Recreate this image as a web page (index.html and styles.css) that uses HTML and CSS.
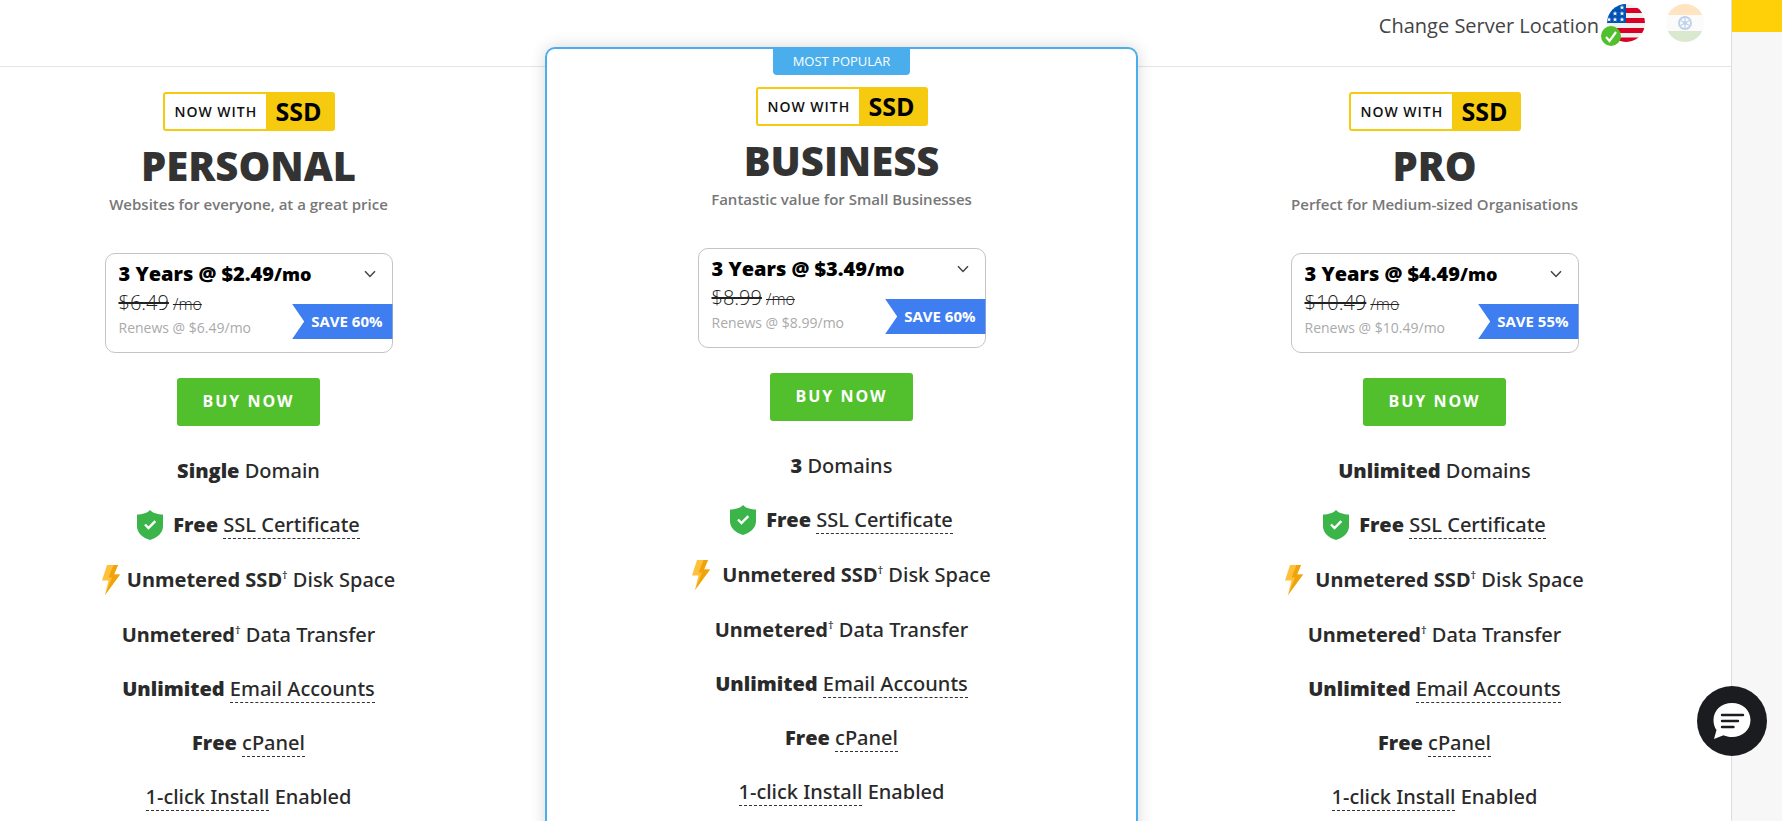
FILE: index.html
```
<!DOCTYPE html>
<html lang="en">
<head>
  <meta charset="UTF-8">
  <meta name="viewport" content="width=device-width, initial-scale=1.0">
  <title>Web Hosting Plans</title>
  <link rel="stylesheet" href="styles.css">
</head>
<body>

<!-- Shared icons -->
<svg class="sprite" aria-hidden="true">
  <symbol id="chevron" viewBox="0 0 12 8">
    <path d="M1 1.2 6 6.4 11 1.2" fill="none" stroke="#444" stroke-width="1.5"/>
  </symbol>
  <symbol id="shield" viewBox="0 0 26 30">
    <path d="M13 0C15.500 2.800 20.500 4.500 26 4.500V16.500C26 23 20 28 13 30 6 28 0 23 0 16.500V4.500C5.500 4.500 10.500 2.800 13 0Z" fill="#3bb54a"/>
    <path d="M8 14.500 11.500 18 18.300 11.200" fill="none" stroke="#fff" stroke-width="2.400"/>
  </symbol>
  <symbol id="bolt" viewBox="0 0 18 30">
    <path d="M5 0H16L12 9.500H18L3 30 6.500 15.500H0Z" fill="#ffc13b"/>
    <path d="M16 0 12 9.500H18L3 30 10 12.500H6.500L11.500 0Z" fill="#f0a30a"/>
  </symbol>
</svg>

<div class="page">
  <main class="content">

    <!-- Server location -->
    <header class="location">
      <span class="location-label">Change Server Location</span>
      <button type="button" class="flag" aria-label="United States">
        <svg width="38" height="38" viewBox="0 0 38 38">
          <clipPath id="usClip"><circle cx="19" cy="19" r="19"/></clipPath>
          <g clip-path="url(#usClip)">
            <rect width="38" height="38" fill="#f0f0f0"/>
            <path d="M19 6.500H38M19 16.500H38M0 26.500H38M0 36H38" stroke="#d80027" stroke-width="5"/>
            <rect width="19" height="19" fill="#0052b4"/>
            <g fill="#fff">
              <path id="star" d="M8 7l.6 1.700h1.800L9 9.800l.5 1.700L8 10.400 6.500 11.500 7 9.800 5.600 8.700h1.800Z"/>
              <use href="#star" x="7" y="-6"/>
              <use href="#star" x="7"/>
              <use href="#star" y="6"/>
              <use href="#star" x="7" y="6"/>
              <use href="#star" x="-6" y="6"/>
            </g>
          </g>
        </svg>
        <svg class="flag-check" width="20" height="20" viewBox="0 0 20 20">
          <circle cx="10" cy="10" r="10" fill="#52c02c"/>
          <path d="M5 11 8.500 15 15 6" fill="none" stroke="#fff" stroke-width="2.200"/>
        </svg>
      </button>
      <button type="button" class="flag flag-off" aria-label="India">
        <svg width="38" height="38" viewBox="0 0 38 38">
          <clipPath id="inClip"><circle cx="19" cy="19" r="19"/></clipPath>
          <g clip-path="url(#inClip)">
            <rect width="38" height="38" fill="#f0f0f0"/>
            <rect width="38" height="11" fill="#ff9811"/>
            <rect y="27" width="38" height="11" fill="#6da544"/>
            <circle cx="19" cy="19" r="7" fill="#0052b4"/>
            <circle cx="19" cy="19" r="5" fill="#f0f0f0"/>
            <path d="M19 14V24M14.700 16.500 23.300 21.500M14.700 21.500 23.300 16.500" stroke="#0052b4" stroke-width="1.200"/>
            <circle cx="19" cy="19" r="2" fill="#0052b4"/>
          </g>
        </svg>
      </button>
    </header>

    <!-- Plans -->
    <div class="plans">

      <section class="plan plan-personal">
        <p class="ssd"><span class="ssd-text">NOW WITH</span><strong class="ssd-name">SSD</strong></p>
        <h2>PERSONAL</h2>
        <p class="tagline">Websites for everyone, at a great price</p>
        <div class="price">
          <div class="term">
            <select id="termPersonal" aria-label="Personal billing term">
              <option>3 Years @ $2.49</option>
            </select>
            <label for="termPersonal">/mo</label>
            <svg class="chevron" aria-hidden="true"><use href="#chevron"/></svg>
          </div>
          <p class="old"><s>$6.49</s><s class="per">/mo</s></p>
          <p class="renews">Renews @ $6.49/mo</p>
          <span class="save">SAVE 60%</span>
        </div>
        <button type="button" class="buy">BUY NOW</button>
        <ul class="features">
          <li><b>Single</b> Domain</li>
          <li><svg class="shield" aria-hidden="true"><use href="#shield"/></svg><span><b>Free</b> <a href="#ssl">SSL Certificate</a></span></li>
          <li><svg class="bolt" aria-hidden="true"><use href="#bolt"/></svg><span><strong>Unmetered SSD</strong><sup>†</sup> Disk Space</span></li>
          <li><strong>Unmetered</strong><sup>†</sup> Data Transfer</li>
          <li><b>Unlimited</b> <a href="#email">Email Accounts</a></li>
          <li><b>Free</b> <a href="#cpanel">cPanel</a></li>
          <li><a href="#install">1-click Install</a> Enabled</li>
        </ul>
      </section>

      <section class="plan plan-popular">
        <span class="tab">MOST POPULAR</span>
        <p class="ssd"><span class="ssd-text">NOW WITH</span><strong class="ssd-name">SSD</strong></p>
        <h2>BUSINESS</h2>
        <p class="tagline">Fantastic value for Small Businesses</p>
        <div class="price">
          <div class="term">
            <select id="termBusiness" aria-label="Business billing term">
              <option>3 Years @ $3.49</option>
            </select>
            <label for="termBusiness">/mo</label>
            <svg class="chevron" aria-hidden="true"><use href="#chevron"/></svg>
          </div>
          <p class="old"><s>$8.99</s><s class="per">/mo</s></p>
          <p class="renews">Renews @ $8.99/mo</p>
          <span class="save">SAVE 60%</span>
        </div>
        <button type="button" class="buy">BUY NOW</button>
        <ul class="features">
          <li><b>3</b> Domains</li>
          <li><svg class="shield" aria-hidden="true"><use href="#shield"/></svg><span><b>Free</b> <a href="#ssl">SSL Certificate</a></span></li>
          <li><svg class="bolt" aria-hidden="true"><use href="#bolt"/></svg><span><strong>Unmetered SSD</strong><sup>†</sup> Disk Space</span></li>
          <li><strong>Unmetered</strong><sup>†</sup> Data Transfer</li>
          <li><b>Unlimited</b> <a href="#email">Email Accounts</a></li>
          <li><b>Free</b> <a href="#cpanel">cPanel</a></li>
          <li><a href="#install">1-click Install</a> Enabled</li>
        </ul>
      </section>

      <section class="plan">
        <p class="ssd"><span class="ssd-text">NOW WITH</span><strong class="ssd-name">SSD</strong></p>
        <h2>PRO</h2>
        <p class="tagline">Perfect for Medium-sized Organisations</p>
        <div class="price">
          <div class="term">
            <select id="termPro" aria-label="Pro billing term">
              <option>3 Years @ $4.49</option>
            </select>
            <label for="termPro">/mo</label>
            <svg class="chevron" aria-hidden="true"><use href="#chevron"/></svg>
          </div>
          <p class="old"><s>$10.49</s><s class="per">/mo</s></p>
          <p class="renews">Renews @ $10.49/mo</p>
          <span class="save">SAVE 55%</span>
        </div>
        <button type="button" class="buy">BUY NOW</button>
        <ul class="features">
          <li><b>Unlimited</b> Domains</li>
          <li><svg class="shield" aria-hidden="true"><use href="#shield"/></svg><span><b>Free</b> <a href="#ssl">SSL Certificate</a></span></li>
          <li><svg class="bolt" aria-hidden="true"><use href="#bolt"/></svg><span><strong>Unmetered SSD</strong><sup>†</sup> Disk Space</span></li>
          <li><strong>Unmetered</strong><sup>†</sup> Data Transfer</li>
          <li><b>Unlimited</b> <a href="#email">Email Accounts</a></li>
          <li><b>Free</b> <a href="#cpanel">cPanel</a></li>
          <li><a href="#install">1-click Install</a> Enabled</li>
        </ul>
      </section>

    </div>
  </main>
  <div class="gutter"><div class="gutter-top"></div></div>
</div>

<button type="button" class="chat" aria-label="Open chat">
  <svg width="38" height="38" viewBox="0 0 38 38">
    <path d="M19 1C29.500 1 37.500 8 37.500 18S29.500 35 19 35C16 35 13 34.300 10.500 33.200L1 37 3.500 28C1.500 25.500 .5 22 .5 18 .5 8 8.500 1 19 1Z" fill="#fff"/>
    <path d="M9 13H30M9 19H25M9 25H20.500" stroke="#1b1c20" stroke-width="2.400" stroke-linecap="round"/>
  </svg>
</button>

</body>
</html>
```
FILE: styles.css
```
* {
  box-sizing: border-box;
}
body {
  margin: 0;
  font-family: "Open Sans", "Noto Sans", sans-serif;
  color: #2a2a2a;
  background-color: #f7f7f7;
  overflow-x: hidden;
}
p, h2, ul {
  margin: 0;
  padding: 0;
}
button, select {
  font-family: inherit;
  border: none;
  cursor: pointer;
}
.sprite {
  display: none;
}
.page {
  display: flex;
  min-height: 100vh;
}
.content {
  flex: 1;
  min-width: 0;
  background-color: #fff;
  border-right: 1px solid #ddd;
}
.gutter {
  width: 50px;
}
.gutter-top {
  height: 32px;
  background-color: #ffd008;
}

/* Server location */
.location {
  display: flex;
  justify-content: flex-end;
  align-items: flex-start;
  height: 67px;
  padding: 4px 27px 0 0;
  border-bottom: 1px solid #e5e5e5;
}
.location-label {
  font-size: 20px;
  line-height: 44px;
  color: #444;
  margin-right: 8px;
}
.flag {
  position: relative;
  width: 38px;
  height: 38px;
  padding: 0;
  background: none;
}
.flag svg {
  display: block;
}
.flag .flag-check {
  position: absolute;
  left: -6px;
  bottom: -4px;
}
.flag-off {
  margin-left: 21px;
  opacity: 0.25;
}

/* Plans */
.plans {
  display: grid;
  grid-template-columns: repeat(3, 1fr);
  margin-left: -48px;
}
.plan {
  display: flex;
  flex-direction: column;
  align-items: center;
  padding: 25px 20px 40px;
}
.plan-popular {
  position: relative;
  margin-top: -20px;
  padding-top: 38px;
  background-color: #fff;
  border: 2px solid #4aaeec;
  border-bottom: none;
  border-radius: 10px 10px 0 0;
  box-shadow: 0 0 16px rgba(0, 0, 0, 0.16);
}
.tab {
  position: absolute;
  top: 0;
  padding: 0 20px 1px;
  font-size: 13px;
  line-height: 25px;
  color: #fff;
  background-color: #4aaeec;
  border-radius: 0 0 4px 4px;
}
.ssd {
  display: flex;
  width: 172px;
  height: 39px;
  border: 2px solid #f6ca0e;
  border-radius: 3px;
  color: #111;
  line-height: 35px;
}
.ssd-text {
  flex: 1;
  padding-left: 10px;
  font-size: 14px;
  font-weight: 600;
  letter-spacing: 1px;
}
.ssd-name {
  width: 67px;
  padding-left: 10px;
  font-size: 25px;
  color: #000;
  background-color: #f6ca0e;
}
h2 {
  margin-top: 8px;
  font-size: 40px;
  font-weight: 800;
  line-height: 54px;
  color: #333;
}
.tagline {
  margin-top: 1px;
  font-size: 15px;
  font-weight: 600;
  line-height: 20px;
  color: #777;
}
.price {
  position: relative;
  width: 288px;
  height: 100px;
  margin-top: 39px;
  padding: 7px 12px 0 13px;
  border: 1px solid #c4c4c4;
  border-radius: 10px;
}
.term {
  display: flex;
  align-items: baseline;
  color: #000;
  font-weight: 800;
}
.term select {
  appearance: none;
  field-sizing: content;
  padding: 0;
  font-size: 20px;
  font-weight: 800;
  line-height: 26px;
  color: #000;
  background: none;
}
.term label {
  font-size: 18px;
}
.chevron {
  align-self: center;
  width: 12px;
  height: 8px;
  margin: 0 4px 0 auto;
}
.old {
  margin-top: 1px;
  font-size: 20px;
  font-weight: 300;
  line-height: 30px;
  color: #222;
}
.per {
  margin-left: 4px;
  font-size: 16px;
}
.renews {
  font-size: 14px;
  line-height: 18px;
  color: #aaa;
}
.save {
  position: absolute;
  right: -1px;
  top: 50px;
  padding: 0 10px 0 19px;
  font-size: 15px;
  font-weight: 700;
  line-height: 35px;
  color: #fff;
  background-color: #3f7ef0;
  clip-path: polygon(0 0, 100% 0, 100% 100%, 0 100%, 12px 50%);
}
.buy {
  width: 143px;
  height: 48px;
  margin-top: 25px;
  padding: 0 0 2px;
  font-size: 16px;
  font-weight: 700;
  letter-spacing: 2px;
  color: #fff;
  background-color: #52c02c;
  border-radius: 3px;
}
.features {
  display: flex;
  flex-direction: column;
  align-items: center;
  gap: 24px;
  margin-top: 30px;
  list-style: none;
  font-family: "Noto Sans", "Open Sans", sans-serif;
  font-size: 20px;
  font-weight: 500;
  line-height: 30px;
}
.features li {
  display: flow-root;
}
.features li:has(svg) {
  display: flex;
  align-items: center;
}
.features li:has(sup) {
  padding-top: 1px;
}
.features b {
  font-family: "Open Sans", sans-serif;
  font-weight: 800;
  line-height: 1;
}
.features sup {
  font-size: 11px;
  line-height: 1;
}
.features a {
  color: inherit;
  text-decoration: none;
  border-bottom: 1px dashed #333;
}
.shield {
  width: 26px;
  height: 30px;
  margin-right: 10px;
}
.bolt {
  width: 18px;
  height: 30px;
  margin-right: 12px;
}
.plan-personal .bolt {
  margin-right: 7px;
}

/* Chat */
.chat {
  position: fixed;
  right: 15px;
  bottom: 65px;
  display: flex;
  align-items: center;
  justify-content: center;
  width: 70px;
  height: 70px;
  background-color: #1b1c20;
  border-radius: 50%;
}
```
